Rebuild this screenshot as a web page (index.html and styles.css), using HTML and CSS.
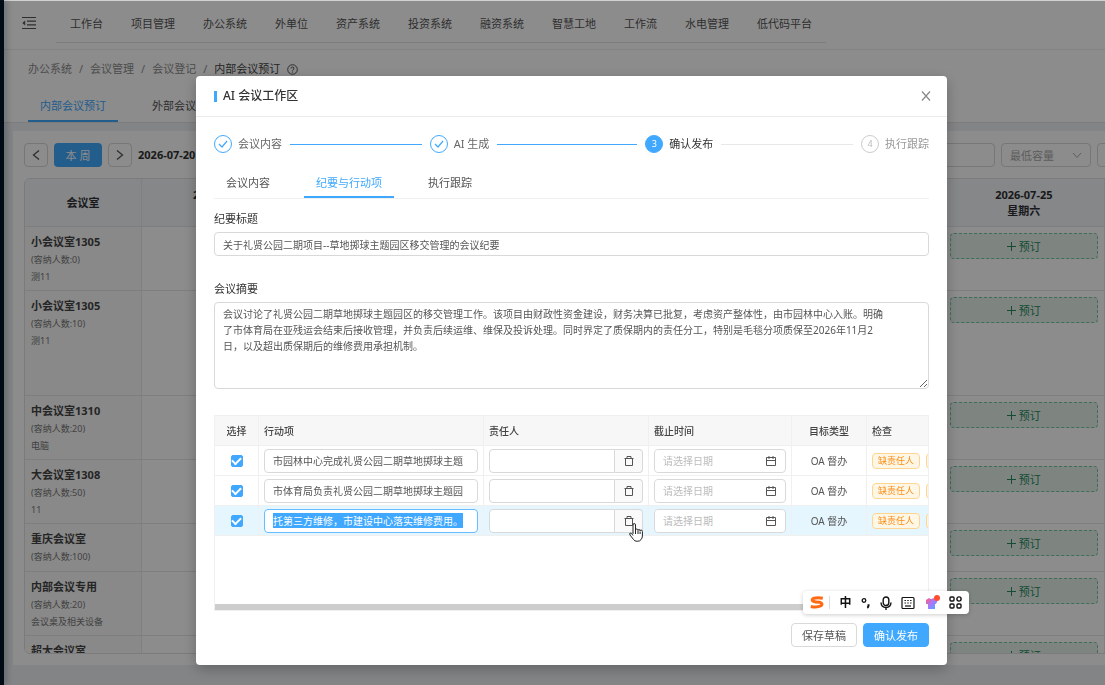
FILE: index.html
```html
<!DOCTYPE html>
<html lang="zh-CN">
<head>
    <meta charset="UTF-8">
    <meta name="viewport" content="width=device-width, initial-scale=1.0">
    <title>内部会议预订</title>
    <link rel="stylesheet" href="styles.css">
</head>
<body>
    <div class="app">
        <aside class="sider"></aside>
        <div class="main">
            <header class="topbar">
                <button class="fold-btn" aria-label="折叠菜单">
                    <svg width="14" height="14" viewBox="0 0 14 14" fill="none" stroke="currentColor" stroke-width="1.2"><path d="M0 1.5h14M5 5.2h9M5 8.8h9M0 12.5h14"/><path d="M3.2 4.5v5L0.3 7z" fill="currentColor" stroke="none"/></svg>
                </button>
                <nav class="menu">
                    <a href="#">工作台</a>
                    <a href="#">项目管理</a>
                    <a href="#">办公系统</a>
                    <a href="#">外单位</a>
                    <a href="#">资产系统</a>
                    <a href="#">投资系统</a>
                    <a href="#">融资系统</a>
                    <a href="#">智慧工地</a>
                    <a href="#">工作流</a>
                    <a href="#">水电管理</a>
                    <a href="#">低代码平台</a>
                </nav>
            </header>

            <div class="page-head">
                <div class="breadcrumb">
                    <a href="#">办公系统</a><span>/</span>
                    <a href="#">会议管理</a><span>/</span>
                    <a href="#">会议登记</a><span>/</span>
                    <b>内部会议预订</b>
                    <svg width="11" height="11" viewBox="0 0 11 11" fill="none" stroke="currentColor"><circle cx="5.5" cy="5.5" r="4.8"/><path d="M4 4.5a1.5 1.5 0 1 1 2.2 1.3q-.7.3-.7 1M5.5 7.6v1"/></svg>
                </div>
                <div class="page-tabs">
                    <button class="active">内部会议预订</button>
                    <button>外部会议预订</button>
                </div>
            </div>

            <!-- 会议室预订看板 -->
            <section class="board">
                <div class="toolbar">
                    <button class="square-btn" aria-label="上一周"><svg width="10" height="12" viewBox="0 0 10 12" fill="none" stroke="currentColor" stroke-width="1.3"><path d="M8 1.5 2.5 6 8 10.5"/></svg></button>
                    <button class="week-btn">本 周</button>
                    <button class="square-btn" aria-label="下一周"><svg width="10" height="12" viewBox="0 0 10 12" fill="none" stroke="currentColor" stroke-width="1.3"><path d="M2 1.5 7.5 6 2 10.5"/></svg></button>
                    <strong class="range">2026-07-20 ~ 2026-07-26</strong>
                    <input class="tool-input" type="text" aria-label="会议室名称">
                    <div class="tool-select">
                        <select aria-label="最低容量"><option>最低容量</option></select>
                        <svg width="10" height="7" viewBox="0 0 10 7" fill="none" stroke="currentColor"><path d="M1 1l4 4.5L9 1"/></svg>
                    </div>
                    <input class="tool-input" type="text" aria-label="设备">
                </div>
                <div class="rooms-wrap">
                    <table class="rooms">
                        <thead>
                            <tr>
                                <th class="room-col">会议室</th>
                                <th>2026-07-20<br>星期一</th>
                                <th>2026-07-21<br>星期二</th>
                                <th>2026-07-22<br>星期三</th>
                                <th>2026-07-23<br>星期四</th>
                                <th>2026-07-24<br>星期五</th>
                                <th>2026-07-25<br>星期六</th>
                                <th></th>
                            </tr>
                        </thead>
                        <tbody>
                            <tr>
                                <td class="room-col"><b>小会议室1305</b><p>(容纳人数:0)</p><p>测11</p></td>
                                <td></td><td></td><td></td><td></td><td></td>
                                <td><button class="book-btn"><i class="plus"></i>预订</button></td><td></td>
                            </tr>
                            <tr class="tall">
                                <td class="room-col"><b>小会议室1305</b><p>(容纳人数:10)</p><p>测11</p></td>
                                <td></td><td></td><td></td><td></td><td></td>
                                <td><button class="book-btn"><i class="plus"></i>预订</button></td><td></td>
                            </tr>
                            <tr>
                                <td class="room-col"><b>中会议室1310</b><p>(容纳人数:20)</p><p>电脑</p></td>
                                <td></td><td></td><td></td><td></td><td></td>
                                <td><button class="book-btn"><i class="plus"></i>预订</button></td><td></td>
                            </tr>
                            <tr>
                                <td class="room-col"><b>大会议室1308</b><p>(容纳人数:50)</p><p>11</p></td>
                                <td></td><td></td><td></td><td></td><td></td>
                                <td><button class="book-btn"><i class="plus"></i>预订</button></td><td></td>
                            </tr>
                            <tr>
                                <td class="room-col"><b>重庆会议室</b><p>(容纳人数:100)</p></td>
                                <td></td><td></td><td></td><td></td><td></td>
                                <td><button class="book-btn"><i class="plus"></i>预订</button></td><td></td>
                            </tr>
                            <tr>
                                <td class="room-col"><b>内部会议专用</b><p>(容纳人数:20)</p><p>会议桌及相关设备</p></td>
                                <td></td><td></td><td></td><td></td><td></td>
                                <td><button class="book-btn"><i class="plus"></i>预订</button></td><td></td>
                            </tr>
                            <tr>
                                <td class="room-col"><b>超大会议室</b></td>
                                <td></td><td></td><td></td><td></td><td></td>
                                <td><button class="book-btn"><i class="plus"></i>预订</button></td><td></td>
                            </tr>
                        </tbody>
                    </table>
                </div>
            </section>
        </div>
    </div>

    <!-- AI 会议工作区弹窗 -->
    <div class="mask">
        <div class="modal" role="dialog" aria-labelledby="modal-title">
            <div class="modal-header">
                <h2 id="modal-title">AI 会议工作区</h2>
                <button class="close-btn" aria-label="关闭"><svg width="10" height="10" viewBox="0 0 10 10" fill="none" stroke="currentColor" stroke-width="1.2"><path d="M1 .5l8 9M9 .5l-8 9"/></svg></button>
            </div>
            <div class="modal-body">
                <ol class="steps">
                    <li class="done"><span class="dot"><svg width="10" height="8" viewBox="0 0 10 8" fill="none" stroke="currentColor" stroke-width="1.2"><path d="M1 4l3 3 5-6"/></svg></span>会议内容</li>
                    <li class="done"><span class="dot"><svg width="10" height="8" viewBox="0 0 10 8" fill="none" stroke="currentColor" stroke-width="1.2"><path d="M1 4l3 3 5-6"/></svg></span>AI 生成</li>
                    <li class="current"><span class="dot">3</span>确认发布</li>
                    <li><span class="dot">4</span>执行跟踪</li>
                </ol>

                <div class="tabs">
                    <button>会议内容</button>
                    <button class="active">纪要与行动项</button>
                    <button>执行跟踪</button>
                </div>

                <label class="label" for="title">纪要标题</label>
                <input class="field" type="text" id="title" value="关于礼贤公园二期项目--草地掷球主题园区移交管理的会议纪要">

                <label class="label label-summary" for="summary">会议摘要</label>
                <textarea class="field summary" id="summary">会议讨论了礼贤公园二期草地掷球主题园区的移交管理工作。该项目由财政性资金建设，财务决算已批复，考虑资产整体性，由市园林中心入账。明确了市体育局在亚残运会结束后接收管理，并负责后续运维、维保及投诉处理。同时界定了质保期内的责任分工，特别是毛毯分项质保至2026年11月2日，以及超出质保期后的维修费用承担机制。</textarea>

                <div class="actions-wrap">
                    <table class="actions">
                        <thead>
                            <tr>
                                <th class="c-check">选择</th>
                                <th class="c-item">行动项</th>
                                <th class="c-owner">责任人</th>
                                <th class="c-date">截止时间</th>
                                <th class="c-type">目标类型</th>
                                <th class="c-state">检查</th>
                            </tr>
                        </thead>
                        <tbody>
                            <tr>
                                <td class="c-check"><input class="check" type="checkbox" aria-label="选择行动项 1" checked></td>
                                <td><input class="field" type="text" aria-label="行动项 1" value="市园林中心完成礼贤公园二期草地掷球主题"></td>
                                <td><div class="group"><input class="field" type="text" aria-label="责任人 1"><button aria-label="清除责任人"><svg width="10" height="10" viewBox="0 0 10 10" fill="none" stroke="currentColor"><path d="M0.5 2.5h9M3 2.5v-2h4v2M1.5 2.5v7h7v-7"/></svg></button></div></td>
                                <td><div class="date"><input class="field" type="text" aria-label="截止时间 1" placeholder="请选择日期"><svg width="10" height="10" viewBox="0 0 10 10" fill="none" stroke="currentColor"><path d="M0.5 1.5h9v8h-9zM0.5 4.5h9M3 0v3M7 0v3"/></svg></div></td>
                                <td class="c-type">OA 督办</td>
                                <td><div class="tags"><span>缺责任人</span><span>缺截止时间</span></div></td>
                            </tr>
                            <tr>
                                <td class="c-check"><input class="check" type="checkbox" aria-label="选择行动项 2" checked></td>
                                <td><input class="field" type="text" aria-label="行动项 2" value="市体育局负责礼贤公园二期草地掷球主题园"></td>
                                <td><div class="group"><input class="field" type="text" aria-label="责任人 2"><button aria-label="清除责任人"><svg width="10" height="10" viewBox="0 0 10 10" fill="none" stroke="currentColor"><path d="M0.5 2.5h9M3 2.5v-2h4v2M1.5 2.5v7h7v-7"/></svg></button></div></td>
                                <td><div class="date"><input class="field" type="text" aria-label="截止时间 2" placeholder="请选择日期"><svg width="10" height="10" viewBox="0 0 10 10" fill="none" stroke="currentColor"><path d="M0.5 1.5h9v8h-9zM0.5 4.5h9M3 0v3M7 0v3"/></svg></div></td>
                                <td class="c-type">OA 督办</td>
                                <td><div class="tags"><span>缺责任人</span><span>缺截止时间</span></div></td>
                            </tr>
                            <tr class="hover">
                                <td class="c-check"><input class="check" type="checkbox" aria-label="选择行动项 3" checked></td>
                                <td><input class="field" type="text" id="active-item" aria-label="行动项 3" value="托第三方维修，市建设中心落实维修费用。"></td>
                                <td>
                                    <div class="group"><input class="field" type="text" aria-label="责任人 3"><button aria-label="清除责任人"><svg width="10" height="10" viewBox="0 0 10 10" fill="none" stroke="currentColor"><path d="M0.5 2.5h9M3 2.5v-2h4v2M1.5 2.5v7h7v-7"/></svg></button>
                                        <svg class="pointer" width="14" height="19" viewBox="0 0 14 19" fill="#fff" stroke="#222" stroke-linejoin="round"><path d="M4 11V2q0-1.5 1.2-1.5T6.5 2v5q0-1 1.2-1T9 7.5q0-1 1-1t1.100 1.300q0-.8 1-.8t1.300 1.400V13q0 2-1.300 3.500-1 1.800-3.900 1.800-2.700 0-3.700-1.800L1 12q-.8-1.500.2-2t2.800 2.500M6.500 7v4M9 8v3M11.100 8.500V11"/></svg>
                                    </div>
                                </td>
                                <td><div class="date"><input class="field" type="text" aria-label="截止时间 3" placeholder="请选择日期"><svg width="10" height="10" viewBox="0 0 10 10" fill="none" stroke="currentColor"><path d="M0.5 1.5h9v8h-9zM0.5 4.5h9M3 0v3M7 0v3"/></svg></div></td>
                                <td class="c-type">OA 督办</td>
                                <td><div class="tags"><span>缺责任人</span><span>缺截止时间</span></div></td>
                            </tr>
                        </tbody>
                    </table>
                    <div class="scrollbar"></div>
                </div>

                <div class="modal-footer">
                    <button class="btn">保存草稿</button>
                    <button class="btn primary">确认发布</button>
                </div>
            </div>
        </div>
    </div>

    <!-- 输入法悬浮条 -->
    <div class="ime">
        <svg class="ime-logo" width="14" height="13" viewBox="0 0 14 13" fill="none" stroke="#ff6a13" stroke-width="3"><path d="M12.800 2.200Q8 1.200 4 2.200 1 3.500 3 5.200 5 6.200 9.500 6.300 13.500 7.500 11 9.800 7 12 .8 10.500"/></svg>
        <span class="ime-line"></span>
        <span class="ime-zh">中</span>
        <svg width="10" height="12" viewBox="0 0 10 12" fill="none" stroke="#111" stroke-width="1.300"><circle cx="3" cy="3.500" r="1.800"/><path d="M7.500 7.300v1.500q0 1.200-1.200 2" stroke-width="2"/></svg>
        <svg width="12" height="14" viewBox="0 0 12 14" fill="none" stroke="#111" stroke-width="1.400"><rect x="3.200" y="1" width="5.600" height="8.500" rx="2.800"/><path d="M1 6.500q.3 5 5 5t5-5M6 11.500V14"/></svg>
        <svg width="14" height="14" viewBox="0 0 14 14" fill="none" stroke="#111" stroke-width="1.200"><rect x="1" y="1.500" width="12" height="11" rx="1"/><path d="M3.500 4.500h7M3.500 7h7" stroke-dasharray="1.400 1.400"/><path d="M4 10h6"/></svg>
        <svg width="15" height="16" viewBox="0 0 15 16"><defs><linearGradient id="shirt" x1="0" y1="0" x2="1" y2="1"><stop offset="0" stop-color="#ff5a78"/><stop offset=".5" stop-color="#a978ff"/><stop offset="1" stop-color="#36b6ff"/></linearGradient></defs><path d="M1 5l3-2q2 2 4.500 0l4 3-1.500 3h-1v5H3V9H1z" fill="url(#shirt)"/><circle cx="12" cy="3" r="3" fill="#ff4d2e"/></svg>
        <svg width="13" height="13" viewBox="0 0 13 13" fill="none" stroke="#111" stroke-width="1.400"><rect x="1" y="1" width="4" height="4" rx="1"/><circle cx="10" cy="3" r="2.100"/><rect x="1" y="8" width="4" height="4" rx="1"/><rect x="8" y="8" width="4" height="4" rx="1"/></svg>
    </div>

    <script>
        const item = document.getElementById('active-item');
        item.focus();
        item.select();
    </script>
</body>
</html>
```
FILE: styles.css
```css
* {
    box-sizing: border-box;
}
body {
    margin: 0;
    font-family: "Noto Sans", "Noto Sans CJK SC", sans-serif;
    font-size: 11px;
    line-height: 16px;
    color: #555;
    overflow: hidden;
}
button, input, select, textarea {
    font-family: inherit;
    font-size: 11px;
    color: inherit;
}
button {
    padding: 0;
    border: none;
    background: none;
    cursor: pointer;
}
a {
    color: inherit;
    text-decoration: none;
}
svg {
    display: block;
    flex: none;
}
.app {
    display: flex;
    height: 100vh;
    background-color: #eef0f4;
}
.sider {
    flex: none;
    width: 4px;
    background-color: #001529;
    box-shadow: 2px 0 6px rgba(0, 21, 41, 0.35);
    z-index: 1;
}
.main {
    flex: 1;
    min-width: 0;
    overflow: hidden;
}
/* 顶部导航 */
.topbar {
    display: flex;
    height: 50px;
    padding-left: 18px;
    background-color: #fff;
    border-bottom: 1px solid #eceef1;
}
.fold-btn {
    width: 34px;
    padding-bottom: 4px;
}
.menu {
    display: flex;
    height: 43px;
    padding-top: 4px;
    line-height: 40px;
    border-bottom: 1px solid #e4e4e4;
}
.menu a {
    padding: 0 14px;
    white-space: nowrap;
}
.page-head {
    padding: 11px 24px 0;
    background-color: #fff;
    border-bottom: 1px solid #e0e2e6;
}
.breadcrumb {
    display: flex;
    align-items: center;
    gap: 7px;
    color: #8c8c8c;
}
.breadcrumb b {
    font-weight: normal;
    color: #444;
}
.breadcrumb svg {
    color: #555;
}
.page-tabs {
    display: flex;
    gap: 22px;
    margin-top: 12px;
}
.page-tabs button {
    height: 33px;
    padding: 0 12px;
    border-bottom: 2px solid transparent;
}
.page-tabs .active {
    color: #40a9ff;
    border-color: #40a9ff;
}
/* 预订看板 */
.board {
    margin: 8px 0 0 9px;
    height: 534px;
    padding: 12px 0 0 11px;
    background-color: #fff;
}
.toolbar {
    display: flex;
    gap: 6px;
    align-items: center;
    width: 1163px;
    height: 24px;
}
.square-btn {
    display: flex;
    align-items: center;
    justify-content: center;
    width: 24px;
    height: 24px;
    border: 1px solid #d9d9d9;
    border-radius: 4px;
}
.week-btn {
    width: 48px;
    height: 24px;
    border-radius: 4px;
    background-color: #40a9ff;
    color: #fff;
}
.range {
    flex: 1;
    color: #303133;
}
.tool-input, .tool-select {
    width: 90px;
    height: 24px;
    border: 1px solid #d9d9d9;
    border-radius: 4px;
    background-color: #fff;
}
.tool-select {
    display: flex;
    align-items: center;
    padding: 0 8px;
    color: #aaa;
}
.tool-select select {
    flex: 1;
    min-width: 0;
    appearance: none;
    border: none;
    padding: 0;
    background: none;
}
.rooms-wrap {
    width: 1242px;
    height: 476px;
    margin-top: 11px;
    overflow: hidden;
    border: 1px solid #e0e0e3;
    border-radius: 6px;
}
.rooms {
    table-layout: fixed;
    width: 100%;
    border-collapse: separate;
    border-spacing: 0;
}
.rooms th, .rooms td {
    border-right: 1px solid #e8eaee;
    border-bottom: 1px solid #e4e6ea;
}
.rooms th {
    height: 48px;
    padding: 0;
    background-color: #f3f6fa;
    color: #303133;
}
.rooms td {
    height: 48px;
    padding: 6px;
    vertical-align: top;
}
.rooms .room-col {
    width: 117px;
}
.rooms td.room-col {
    padding-bottom: 5px;
    background-color: #fafafa;
}
.rooms .tall td {
    height: 105px;
}
.room-col b {
    display: block;
    line-height: 18px;
    color: #444;
}
.room-col p {
    margin: 0;
    font-size: 9px;
    line-height: 17px;
    color: #777;
}
.book-btn {
    display: flex;
    align-items: center;
    justify-content: center;
    gap: 3px;
    width: 100%;
    height: 26px;
    border: 1px dashed #73c9a0;
    border-radius: 4px;
    background-color: #e6f3ec;
    color: #278a5b;
}
.plus {
    width: 9px;
    height: 9px;
    background: linear-gradient(currentColor, currentColor) center / 9px 1px no-repeat, linear-gradient(currentColor, currentColor) center / 1px 9px no-repeat;
}
/* 弹窗 */
.mask {
    position: fixed;
    inset: 1px 0 0;
    z-index: 10;
    padding: 75px 0 0 38px;
    background-color: rgba(0, 0, 0, 0.45);
    box-shadow: 0 -1px 0 rgba(0, 0, 0, 0.18);
}
.modal {
    max-width: 751px;
    margin: 0 auto;
    border-radius: 4px;
    background-color: #fff;
    box-shadow: 0 4px 14px rgba(0, 0, 0, 0.25);
}
.modal-header {
    display: flex;
    align-items: center;
    justify-content: space-between;
    height: 41px;
    padding: 0 16px 0 18px;
    border-bottom: 1px solid #ececec;
}
.modal-header h2 {
    display: flex;
    align-items: center;
    margin: 0;
    font-size: 12px;
    font-weight: 500;
    color: #333;
}
.modal-header h2::before {
    content: "";
    width: 3px;
    height: 11px;
    margin-right: 6px;
    background-color: #40a9ff;
}
.close-btn {
    padding: 0;
    color: #888;
}
.modal-body {
    padding: 18px;
}
.steps {
    display: flex;
    gap: 8px;
    margin: 0;
    padding: 0;
    list-style: none;
}
.steps li {
    display: flex;
    flex: 1;
    align-items: center;
    height: 18px;
    white-space: nowrap;
    color: #999;
}
.steps li:last-child {
    flex: none;
}
.steps li:not(:last-child)::after {
    content: "";
    flex: 1;
    height: 1px;
    margin-left: 8px;
    background-color: #e8e8e8;
}
.steps .done {
    color: #666;
}
.steps .done::after {
    background-color: #40a9ff !important;
}
.steps .current {
    color: #333;
}
.dot {
    display: flex;
    align-items: center;
    justify-content: center;
    width: 18px;
    height: 18px;
    margin-right: 6px;
    border: 1px solid #ccc;
    border-radius: 50%;
    font-size: 9px;
    color: #bbb;
}
.done .dot {
    border-color: #40a9ff;
    color: #40a9ff;
}
.current .dot {
    border-color: #40a9ff;
    background-color: #40a9ff;
    color: #fff;
}
.tabs {
    display: flex;
    gap: 22px;
    margin-top: 15px;
    border-bottom: 1px solid #f0f0f0;
}
.tabs button {
    height: 30px;
    padding: 0 12px;
    border-bottom: 2px solid transparent;
}
.tabs .active {
    color: #40a9ff;
    border-color: #40a9ff;
}
.label {
    display: block;
    margin: 12px 0 5px;
    color: #333;
}
.label-summary {
    margin-top: 25px;
}
.field {
    display: block;
    width: 100%;
    height: 24px;
    padding: 0 8px;
    border: 1px solid #d9d9d9;
    border-radius: 4px;
    outline: none;
    background-color: #fff;
    font-size: 10px;
}
.field::placeholder {
    color: #bbb;
}
.field::selection {
    background-color: #40a9ff;
    color: #fff;
}
.summary {
    height: 87px;
    padding: 3px 40px 3px 8px;
    line-height: 16px;
    overflow: hidden;
}
/* 行动项表格 */
.actions-wrap {
    display: flex;
    flex-direction: column;
    justify-content: space-between;
    height: 196px;
    margin-top: 26px;
    overflow: hidden;
    border: 1px solid #f0f0f0;
}
.actions {
    table-layout: fixed;
    width: 800px;
    border-collapse: separate;
    border-spacing: 0;
    font-size: 10px;
}
.actions th, .actions td {
    height: 30px;
    padding: 0 5px;
    text-align: left;
    border-right: 1px solid #f0f0f0;
    border-bottom: 1px solid #f0f0f0;
}
.actions th {
    background-color: #f7f7f7;
    font-weight: 500;
    color: #444;
}
.actions .hover td {
    background-color: #e6f6ff;
}
.actions .c-check, .actions .c-type {
    text-align: center;
}
.c-check {
    width: 44px;
}
.c-item {
    width: 225px;
}
.c-owner {
    width: 165px;
}
.c-date {
    width: 143px;
}
.c-type {
    width: 75px;
}
#active-item {
    border-color: #69bcff;
}
.actions td.c-check {
    line-height: 0;
}
.check {
    display: inline-flex;
    align-items: center;
    justify-content: center;
    appearance: none;
    width: 12px;
    height: 12px;
    margin: 0;
    border: 1px solid #d9d9d9;
    border-radius: 2px;
}
.check:checked {
    border-color: #40a9ff;
    background-color: #40a9ff;
}
.check:checked::after {
    content: "";
    width: 7px;
    height: 4px;
    margin-bottom: 2px;
    border: solid #fff;
    border-width: 0 0 2px 2px;
    transform: rotate(-45deg);
}
.group {
    position: relative;
    display: flex;
}
.group .field {
    flex: 1;
    min-width: 0;
    border-radius: 4px 0 0 4px;
}
.group button {
    display: flex;
    align-items: center;
    justify-content: center;
    width: 28px;
    border: 1px solid #d9d9d9;
    border-left: none;
    border-radius: 0 4px 4px 0;
    background-color: #fafafa;
}
.pointer {
    position: absolute;
    top: 14px;
    right: 0;
}
.date {
    display: flex;
    align-items: center;
    padding-right: 9px;
    border: 1px solid #d9d9d9;
    border-radius: 4px;
    background-color: #fff;
}
.date .field {
    height: 22px;
    border: none;
}
.tags {
    display: flex;
    gap: 6px;
}
.tags span {
    padding: 0 5px;
    border: 1px solid #ffd591;
    border-radius: 4px;
    background-color: #fff7e6;
    font-size: 9px;
    line-height: 14px;
    white-space: nowrap;
    color: #fa8c16;
}
.scrollbar {
    height: 6px;
    background-color: #cdcdcd;
}
.modal-footer {
    display: flex;
    justify-content: flex-end;
    gap: 6px;
    margin-top: 12px;
}
.btn {
    width: 66px;
    height: 24px;
    border: 1px solid #d9d9d9;
    border-radius: 4px;
}
.btn.primary {
    border-color: #40a9ff;
    background-color: #40a9ff;
    color: #fff;
}
/* 输入法 */
.ime {
    position: fixed;
    right: 136px;
    bottom: 71px;
    z-index: 20;
    display: flex;
    align-items: center;
    justify-content: space-between;
    width: 166px;
    height: 23px;
    padding: 0 7px;
    border-radius: 4px;
    background-color: #fff;
    box-shadow: 0 1px 4px rgba(0, 0, 0, 0.2);
}
.ime-line {
    width: 1px;
    height: 13px;
    margin-left: -4px;
    background-color: #ddd;
}
.ime-zh {
    font-size: 12px;
    font-weight: bold;
    color: #111;
}
```
